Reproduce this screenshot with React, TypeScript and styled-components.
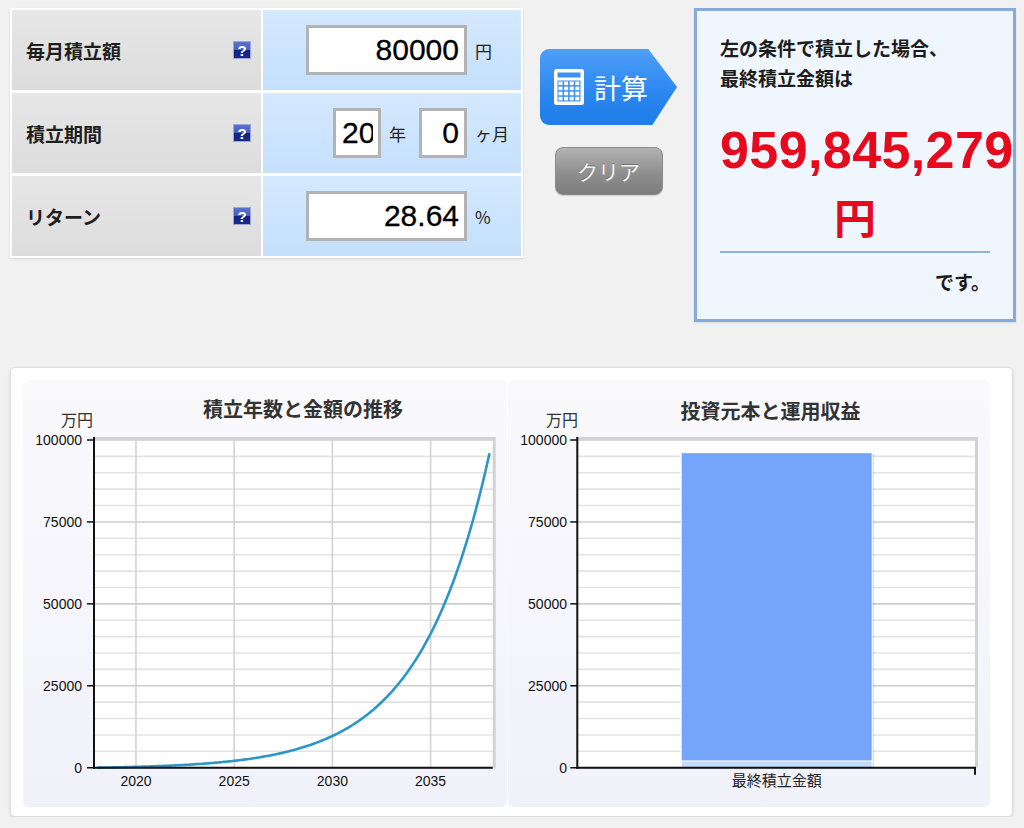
import React from "react";
import styled, { createGlobalStyle } from "styled-components";

const GlobalStyle = createGlobalStyle`
  html, body { margin: 0; padding: 0; }
  body {
    background: #f1f1f1;
    font-family: "Noto Sans CJK JP", "Noto Sans", sans-serif;
    color: #222;
  }
`;

const Page = styled.div`
  padding: 8px 0 0 10px;
  width: 1024px;
  box-sizing: border-box;
`;

const Top = styled.div`
  display: flex;
  align-items: flex-start;
`;

const FormTable = styled.div`
  display: grid;
  grid-template-columns: 249px 258px;
  grid-auto-rows: 80px;
  column-gap: 2px;
  row-gap: 3px;
  padding: 2px;
  background: #fff;
  box-shadow: 0 1px 2px rgba(0, 0, 0, 0.12);
`;

const LabelCell = styled.div`
  display: flex;
  align-items: center;
  justify-content: space-between;
  padding: 0 10px 0 14px;
  background: linear-gradient(#e7e7e7, #dcdcdc);
  font-size: 19px;
  font-weight: 700;
  color: #1e1e1e;
`;

const HelpIcon = styled.span`
  width: 18px;
  height: 18px;
  display: flex;
  align-items: center;
  justify-content: center;
  background: linear-gradient(#5b73d0 0%, #4560c2 50%, #15237e 50%, #1a2a88 100%);
  color: #fff;
  font-family: "Liberation Sans", Arial, sans-serif;
  font-weight: 700;
  font-size: 15px;
  line-height: 1;
  box-shadow: 0 0 0 1px #9aa6d8 inset;
`;

const ValueCell = styled.div`
  display: flex;
  align-items: center;
  justify-content: flex-end;
  padding-right: 7px;
  background: linear-gradient(#d4e9fe, #c5e0fc);
`;

const NumInput = styled.input<{ $w: number }>`
  width: ${(p) => p.$w}px;
  height: 50px;
  box-sizing: border-box;
  border: 3px solid #b3b3b3;
  border-radius: 0;
  background: #fff;
  padding: 0 5px 0 6px;
  font-family: "Liberation Sans", Arial, sans-serif;
  font-size: 30px;
  -webkit-text-stroke: 0.3px #000;
  color: #000;
  text-align: right;
  outline: none;
  margin: 0;
`;

const Unit = styled.span<{ $w?: number; $mr?: number }>`
  margin-left: 8px;
  margin-right: ${(p) => p.$mr ?? 0}px;
  width: ${(p) => (p.$w ? `${p.$w}px` : "auto")};
  font-size: 17px;
  color: #222;
  white-space: nowrap;
`;

const ButtonCol = styled.div`
  margin-left: 17px;
  padding-top: 41px;
  width: 137px;
  display: flex;
  flex-direction: column;
  align-items: center;
`;

const CalcButton = styled.button`
  width: 137px;
  height: 76px;
  border: none;
  padding: 0 0 0 14px;
  border-radius: 9px;
  background: linear-gradient(#4f9ff7, #2a86f0 60%, #1f7de9);
  clip-path: polygon(0 0, 79% 0, 100% 50%, 82% 100%, 0 100%);
  display: flex;
  align-items: center;
  gap: 10px;
  color: #fff;
  font-family: "Noto Sans CJK JP", sans-serif;
  font-size: 27px;
  font-weight: 400;
  cursor: pointer;
`;

const ClearButton = styled.button`
  margin-top: 22px;
  width: 108px;
  height: 48px;
  border: 1px solid #8d8d8d;
  border-radius: 8px;
  background: linear-gradient(#b2b2b2, #8f8f8f 55%, #7c7c7c);
  color: #f2f2f2;
  font-family: "Noto Sans CJK JP", sans-serif;
  font-size: 21px;
  text-shadow: 0 -1px 0 rgba(0, 0, 0, 0.25);
  box-shadow: 0 1px 1px rgba(0, 0, 0, 0.15);
  padding: 0;
  cursor: pointer;
`;

const ResultBox = styled.div`
  margin-left: 17px;
  width: 322px;
  height: 314px;
  box-sizing: border-box;
  border: 3px solid #86abd9;
  background: #f0f6fe;
  padding: 22px 23px 0 23px;
  box-shadow: 0 1px 2px rgba(0, 0, 0, 0.1);
`;

const Lead = styled.div`
  font-size: 19px;
  font-weight: 700;
  line-height: 30px;
  color: #1c1c1c;
`;

const Amount = styled.div`
  margin-top: 27px;
  font-family: "Liberation Sans", Arial, sans-serif;
  font-size: 52px;
  font-weight: 700;
  letter-spacing: 0.4px;
  line-height: 60px;
  color: #e60a1c;
  white-space: nowrap;
`;

const Yen = styled.div`
  margin-top: 12px;
  text-align: center;
  font-size: 42px;
  font-weight: 700;
  line-height: 48px;
  color: #e60a1c;
`;

const Rule = styled.div`
  margin-top: 11px;
  height: 0;
  border-top: 2px solid #8fb1da;
`;

const Desu = styled.div`
  margin-top: 14px;
  text-align: right;
  font-size: 19px;
  font-weight: 700;
  line-height: 30px;
  color: #1c1c1c;
`;

const ChartPanel = styled.div`
  margin-top: 45px;
  width: 1003px;
  height: 450px;
  box-sizing: border-box;
  background: #fff;
  border: 1px solid #dedede;
  border-radius: 5px;
  box-shadow: 0 1px 3px rgba(0, 0, 0, 0.12);
  padding: 12px 22px 9px 12px;
  display: flex;
  gap: 1px;
`;

const ChartCard = styled.div<{ $w: number }>`
  width: ${(p) => p.$w}px;
  height: 427px;
  border-radius: 6px;
  background: linear-gradient(#fafafd, #f1f1fa);
  overflow: hidden;
`;

const FONT_NUM = '"Liberation Sans", Arial, sans-serif';
const FONT_JP = '"Noto Sans CJK JP", sans-serif';

const Y0 = 387.7;
const YSCALE = 327.7 / 100000;
const yOf = (v: number) => Y0 - v * YSCALE;

const CalcIcon = () => (
  <svg width="30" height="36" viewBox="0 0 30 36">
    <rect x="0" y="0" width="30" height="36" rx="2.5" fill="#fff" />
    <rect x="3.5" y="3.5" width="23" height="5" fill="#3d92f2" />
    <rect x="3.5" y="11.5" width="23" height="21" fill="#3d92f2" />
    {[0, 1, 2, 3].map((r) =>
      [0, 1, 2, 3].map((c) => (
        <rect
          key={`${r}-${c}`}
          x={4.5 + c * 5.6}
          y={12.5 + r * 5.1}
          width={4}
          height={3.6}
          fill="#fff"
        />
      ))
    )}
  </svg>
);

type AxisProps = { left: number; right: number; top: number };

const YAxis: React.FC<AxisProps & { labelEnd: number }> = ({ left, right, top, labelEnd }) => {
  const lines = [];
  for (let k = 0; k <= 20; k++) {
    const y = yOf(k * 5000);
    lines.push(
      <line
        key={k}
        x1={left}
        x2={right}
        y1={y}
        y2={y}
        stroke={k % 5 === 0 ? "#cdcdcd" : "#e3e3e3"}
        strokeWidth={1.6}
      />
    );
  }
  const ticks = [0, 25000, 50000, 75000, 100000];
  return (
    <g>
      <rect x={left} y={top} width={right - left + 3} height={Y0 - top} fill="#d2d2d2" />
      <rect x={left} y={top + 2.5} width={right - left} height={Y0 - top - 2.5} fill="#fff" />
      {lines}
      {ticks.map((v) => (
        <g key={v}>
          <line x1={left - 7} x2={left} y1={yOf(v)} y2={yOf(v)} stroke="#111" strokeWidth={1.5} />
          <text
            x={labelEnd}
            y={yOf(v) + 5}
            textAnchor="end"
            fontFamily={FONT_NUM}
            fontSize={14}
            fill="#111"
          >
            {v}
          </text>
        </g>
      ))}
    </g>
  );
};

const LineChart = () => {
  const r = 0.2864 / 12;
  const xOf = (t: number) => 113 + (t - 2020) * 19.64;
  let d = "";
  for (let m = 0; m <= 240; m++) {
    const v = (8 * (Math.pow(1 + r, m) - 1)) / r;
    const x = xOf(2018 + m / 12);
    const y = yOf(v);
    d += `${m === 0 ? "M" : "L"}${x.toFixed(2)},${y.toFixed(2)} `;
  }
  const left = 71;
  const right = 469.7;
  return (
    <svg width="484" height="427" viewBox="0 0 484 427">
      <text x={280} y={37} textAnchor="middle" fontFamily={FONT_JP} fontWeight={700} fontSize={20} fill="#333">
        積立年数と金額の推移
      </text>
      <text x={70} y={46} textAnchor="end" fontFamily={FONT_JP} fontSize={16} fill="#333">
        万円
      </text>
      <YAxis left={left} right={right} top={57} labelEnd={59} />
      {[2020, 2025, 2030, 2035].map((yr) => (
        <g key={yr}>
          <line x1={xOf(yr)} x2={xOf(yr)} y1={59.5} y2={Y0} stroke="#d3d3d3" strokeWidth={1.6} />
          <text x={xOf(yr)} y={406} textAnchor="middle" fontFamily={FONT_NUM} fontSize={14} fill="#111">
            {yr}
          </text>
        </g>
      ))}
      <path d={d} fill="none" stroke="#2b96c7" strokeWidth={2.6} strokeLinejoin="round" />
      <line x1={left} x2={left} y1={57} y2={Y0 + 1} stroke="#111" strokeWidth={2} />
      <line x1={left - 1} x2={right} y1={Y0} y2={Y0} stroke="#111" strokeWidth={2} />
    </svg>
  );
};

const BarChart = () => {
  const left = 69.3;
  const right = 467;
  const total = 95984.5;
  const principal = 1920;
  const bx = 173.7;
  const bw = 190;
  return (
    <svg width="482" height="427" viewBox="0 0 482 427">
      <text x={262.5} y={39} textAnchor="middle" fontFamily={FONT_JP} fontWeight={700} fontSize={20} fill="#333">
        投資元本と運用収益
      </text>
      <text x={70} y={46} textAnchor="end" fontFamily={FONT_JP} fontSize={16} fill="#333">
        万円
      </text>
      <YAxis left={left} right={right} top={57} labelEnd={59} />
      <rect x={bx + 2.5} y={yOf(total) + 1} width={bw} height={Y0 - yOf(total) - 1} fill="rgba(0,0,0,0.13)" />
      <rect x={bx - 1} y={yOf(total) - 1} width={bw + 2} height={Y0 - yOf(total) + 1} fill="#fff" />
      <rect x={bx} y={yOf(total)} width={bw} height={yOf(principal) - yOf(total) - 1} fill="#74a5fb" />
      <rect x={bx} y={yOf(principal)} width={bw} height={Y0 - yOf(principal)} fill="#c3dcfd" />
      <line x1={left} x2={left} y1={57} y2={Y0 + 1} stroke="#111" strokeWidth={2} />
      <line x1={left - 1} x2={right + 1} y1={Y0} y2={Y0} stroke="#111" strokeWidth={2} />
      <line x1={right} x2={right} y1={Y0} y2={Y0 + 7} stroke="#111" strokeWidth={2} />
      <text x={268.7} y={406} textAnchor="middle" fontFamily={FONT_JP} fontSize={15} fill="#222">
        最終積立金額
      </text>
    </svg>
  );
};

export default function App() {
  return (
    <Page>
      <GlobalStyle />
      <Top>
        <FormTable>
          <LabelCell>
            毎月積立額
            <HelpIcon>?</HelpIcon>
          </LabelCell>
          <ValueCell>
            <NumInput $w={161} defaultValue="80000" />
            <Unit $w={39}>円</Unit>
          </ValueCell>
          <LabelCell>
            積立期間
            <HelpIcon>?</HelpIcon>
          </LabelCell>
          <ValueCell>
            <NumInput $w={48} defaultValue="20" />
            <Unit $mr={13}>年</Unit>
            <NumInput $w={48} defaultValue="0" />
            <Unit $w={39}>ヶ月</Unit>
          </ValueCell>
          <LabelCell>
            リターン
            <HelpIcon>?</HelpIcon>
          </LabelCell>
          <ValueCell>
            <NumInput $w={161} defaultValue="28.64" />
            <Unit $w={39}>%</Unit>
          </ValueCell>
        </FormTable>
        <ButtonCol>
          <CalcButton>
            <CalcIcon />
            計算
          </CalcButton>
          <ClearButton>クリア</ClearButton>
        </ButtonCol>
        <ResultBox>
          <Lead>
            左の条件で積立した場合、
            <br />
            最終積立金額は
          </Lead>
          <Amount>959,845,279</Amount>
          <Yen>円</Yen>
          <Rule />
          <Desu>です。</Desu>
        </ResultBox>
      </Top>
      <ChartPanel>
        <ChartCard $w={484}>
          <LineChart />
        </ChartCard>
        <ChartCard $w={482}>
          <BarChart />
        </ChartCard>
      </ChartPanel>
    </Page>
  );
}
